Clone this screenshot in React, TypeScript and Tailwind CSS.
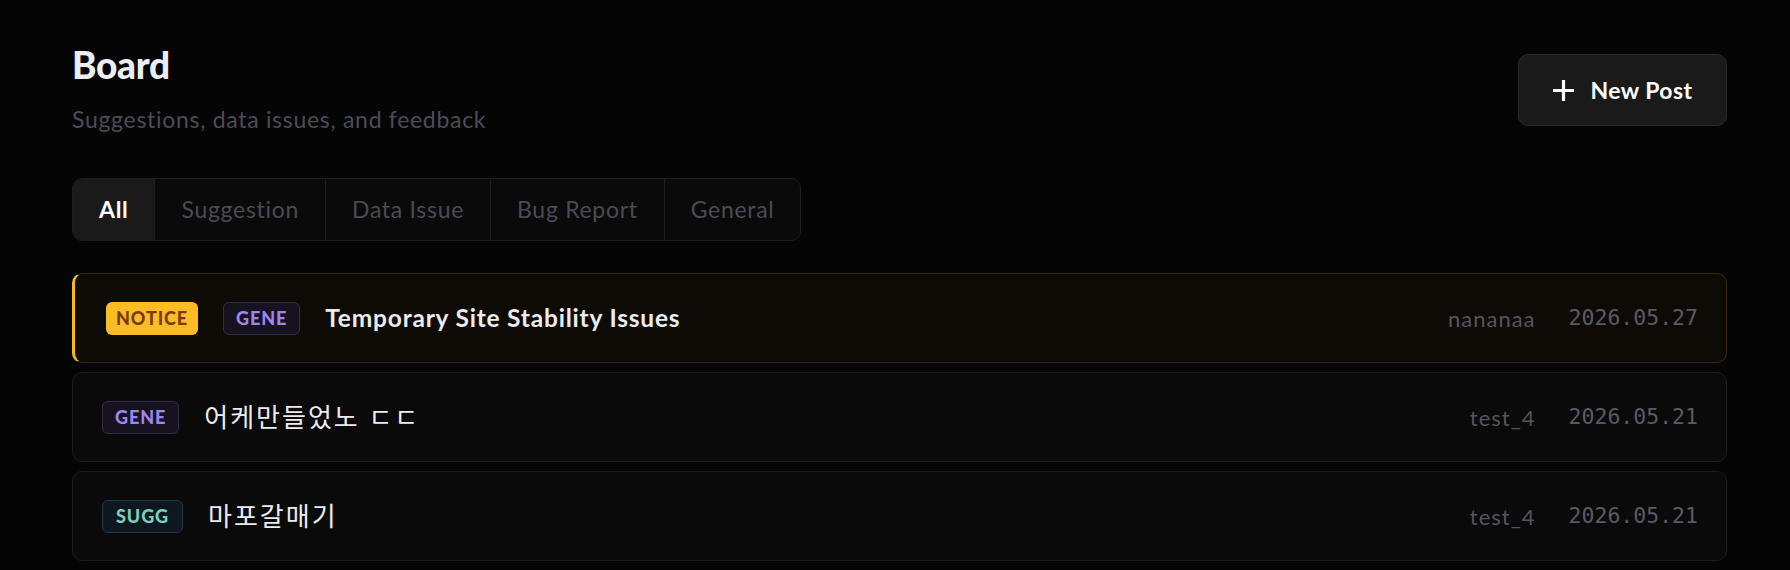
import React, { useState } from 'react';

type Post = {
  id: number
  notice?: boolean
  tag: 'GENE' | 'SUGG'
  title: string
  author: string
  date: string
}

const posts: Post[] = [
  { id: 1, notice: true, tag: 'GENE', title: 'Temporary Site Stability Issues', author: 'nananaa', date: '2026.05.27' },
  { id: 2, tag: 'GENE', title: '어케만들었노 ㄷㄷ', author: 'test_4', date: '2026.05.21' },
  { id: 3, tag: 'SUGG', title: '마포갈매기', author: 'test_4', date: '2026.05.21' },
]

const tabs = ['All', 'Suggestion', 'Data Issue', 'Bug Report', 'General']

const Tag = ({ tag }: { tag: Post['tag'] }) => {
  if (tag === 'GENE') {
    return <span className="h-[33px] px-[12px] flex items-center rounded-[6px] border border-[#352d47] bg-[#17121f] text-[#9f85ea] text-[18px] font-black tracking-[0.9px]">GENE</span>
  }
  return <span className="h-[33px] px-[13px] flex items-center rounded-[6px] border border-[#263646] bg-[#0e1820] text-[#7ccdbb] text-[18px] font-black tracking-[0.9px]">SUGG</span>
}

const PostRow = (post: Post) => {
  return (
    <div className={"h-[90px] flex items-center rounded-[10px] border pr-[28px] " +
      (post.notice ? "border-[#33290f] border-l-[3px] border-l-[#f5b925] bg-[#0e0b06] pl-[31px]" : "border-[#1d1d20] bg-[#0a0a0a] pl-[29px]")}>
      <div className="flex items-center gap-[25px] flex-1">
        {post.notice && (
          <span className="h-[33px] px-[10px] flex items-center rounded-[6px] bg-[#fbbd23] text-[#7a3b0c] text-[18px] font-black tracking-[0.9px]">NOTICE</span>
        )}
        <Tag tag={post.tag}/>
        {post.notice
          ? <span className="text-[24.5px] font-bold tracking-[0.8px] text-[#ececef]">{post.title}</span>
          : <span className="text-[26px] font-normal tracking-[2px] text-[#ececef]">{post.title}</span>}
      </div>
      <span className="text-[22px] tracking-[1px] text-[#54545e]">{post.author}</span>
      <span className="ml-[33px] text-[21.5px] text-[#5a5a64] font-['DejaVu_Sans_Mono',monospace]">{post.date}</span>
    </div>
  )
}

export default function App() {
  const [active, setActive] = useState('All')

  return (
    <div className="min-h-screen bg-[#050505] pl-[72px] pr-[63px] pt-[44px] font-['Lato','Noto_Sans_CJK_KR',sans-serif]">
      <div className="flex justify-between items-start">
        <div>
          <h1 className="text-[37px] leading-[42px] font-black text-[#eceef3] tracking-[-0.3px]">Board</h1>
          <p className="mt-[19px] text-[23px] leading-[28px] tracking-[0.7px] text-[#4c4c58]">Suggestions, data issues, and feedback</p>
        </div>
        <button className="mt-[10px] h-[72px] w-[209px] flex items-center justify-center gap-[17px] rounded-[10px] border border-[#2a2a2c] bg-[#1a1a1a] text-white text-[23px] font-bold tracking-[0.4px]">
          <svg width="21" height="21" viewBox="0 0 22 22" fill="none">
            <path d="M11 1.5v19M1.5 11h19" stroke="white" strokeWidth="3.4" strokeLinecap="square"/>
          </svg>
          New Post
        </button>
      </div>

      <div className="mt-[45px] inline-flex h-[63px] rounded-[10px] border border-[#1e1e21] bg-[#0a0a0a] overflow-hidden">
        {tabs.map((t, i) => (
          <button
            key={t}
            onClick={() => setActive(t)}
            className={"h-full px-[26px] text-[23px] tracking-[0.7px] " + (i > 0 ? "border-l border-[#1e1e21] " : "") +
              (active === t ? "bg-[#1a1a1a] text-white font-bold" : "text-[#4a4a55]")}>
            {t}
          </button>
        ))}
      </div>

      <div className="mt-[32px] flex flex-col gap-[9px]">
        {posts.map(p => <PostRow key={p.id} {...p}/>)}
      </div>
    </div>
  )
}
